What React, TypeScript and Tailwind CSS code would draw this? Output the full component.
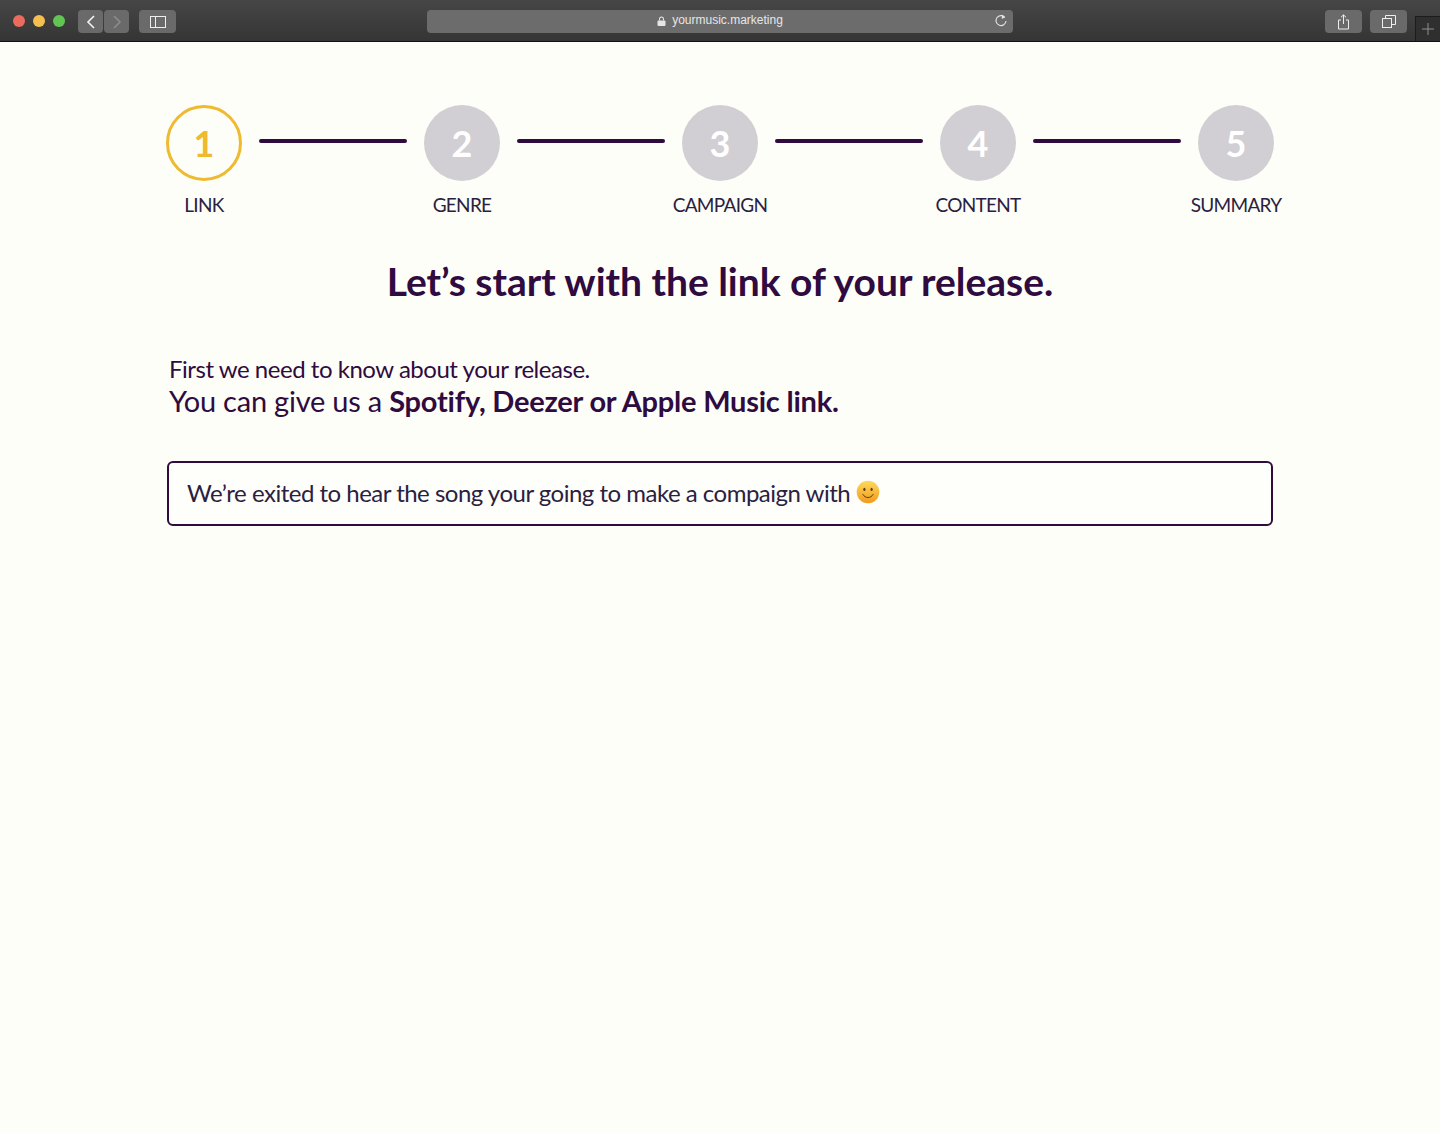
const steps = [
  { n: "1", label: "LINK", active: true },
  { n: "2", label: "GENRE" },
  { n: "3", label: "CAMPAIGN" },
  { n: "4", label: "CONTENT" },
  { n: "5", label: "SUMMARY" },
];

function Btn({ w, children, className = "" }: { w: string; children: React.ReactNode; className?: string }) {
  return <div className={`h-[23px] rounded-[4px] bg-[#6a6a6a] flex items-center justify-center ${w} ${className}`}>{children}</div>;
}

function Smiley() {
  return (
    <svg width="24" height="24" viewBox="0 0 24 24" className="inline-block ml-[6px] -translate-y-[1px]">
      <defs>
        <linearGradient id="sm" x1="0" y1="0" x2="0" y2="1">
          <stop offset="0" stopColor="#fdd95c" />
          <stop offset="1" stopColor="#f39a1c" />
        </linearGradient>
      </defs>
      <circle cx="12" cy="12" r="11.3" fill="url(#sm)" />
      <ellipse cx="8.4" cy="9.4" rx="1.1" ry="1.7" fill="#5c3a10" />
      <ellipse cx="15.6" cy="9.4" rx="1.1" ry="1.7" fill="#5c3a10" />
      <path d="M6.800 14.400c1.400 2.200 3.200 3.100 5.200 3.100s3.800-.9 5.200-3.100" fill="none" stroke="#5c3a10" strokeWidth="1" strokeLinecap="round" />
    </svg>
  );
}

export default function App() {
  return (
    <div className="min-h-[1133px] bg-[#fdfef8] font-['Lato',sans-serif]">
      <header className="relative h-[42px] bg-gradient-to-b from-[#464646] to-[#353535] border-b border-[#111] flex items-start pt-[10px] pl-[13px] pr-[33px]">
        <div className="flex gap-[8px] mt-[5px]">
          <span className="w-3 h-3 rounded-full bg-[#ec6a5e]" />
          <span className="w-3 h-3 rounded-full bg-[#f4bf4f]" />
          <span className="w-3 h-3 rounded-full bg-[#61c554]" />
        </div>
        <div className="flex gap-px ml-[13px]">
          <Btn w="w-[25px]">
            <svg width="10" height="14" viewBox="0 0 10 14" fill="none" stroke="#f2f2f2" strokeWidth="1.6"><path d="M8 1 2 7l6 6" /></svg>
          </Btn>
          <Btn w="w-[25px]">
            <svg width="10" height="14" viewBox="0 0 10 14" fill="none" stroke="#8c8c8c" strokeWidth="1.6"><path d="m2 1 6 6-6 6" /></svg>
          </Btn>
        </div>
        <Btn w="w-[37px]" className="ml-[10px]">
          <svg width="16" height="12" viewBox="0 0 16 12" fill="none" stroke="#eee" strokeWidth="1"><rect x=".5" y=".5" width="15" height="11" /><path d="M5.500 .5v11" /></svg>
        </Btn>
        <div className="relative ml-[251px] w-[586px] h-[23px] rounded-[4px] bg-[#6c6c6c] flex items-center justify-center font-['Liberation_Sans',sans-serif] text-[12px] leading-[21px] pb-[2px] text-[#e6e6e6]">
          <svg width="9" height="10" viewBox="0 0 9 10" className="mr-[6px]" fill="#e6e6e6"><path d="M2 4.500V3a2.500 2.500 0 0 1 5 0v1.500H6V3a1.500 1.500 0 0 0-3 0v1.500z" /><rect x=".5" y="4.500" width="8" height="5.500" rx="1" /></svg>
          yourmusic.marketing
          <svg width="14" height="14" viewBox="0 0 14 14" className="absolute right-[5px] top-[4px]" fill="none" stroke="#e6e6e6" strokeWidth="1.100"><path d="M10.800 3.300A5 5 0 1 0 12 7" /><path d="M7.800 .6l3.300 2.600-3.300 1.700z" fill="#e6e6e6" stroke="none" /></svg>
        </div>
        <div className="ml-auto flex gap-[8px]">
          <Btn w="w-[37px]">
            <svg width="13" height="16" viewBox="0 0 13 16" fill="none" stroke="#eee" strokeWidth="1"><path d="M4 6H1.500v9h10V6H9M6.500 10V1M4 3.300 6.500 .9 9 3.300" /></svg>
          </Btn>
          <Btn w="w-[37px]">
            <svg width="14" height="13" viewBox="0 0 14 13" fill="none" stroke="#eee" strokeWidth="1"><rect x=".5" y="3.500" width="9" height="9" /><path d="M3.500 3.500V.5h10v9h-4" /></svg>
          </Btn>
        </div>
        <div className="absolute right-0 top-[16px] w-[25px] h-[25px] bg-[#2f2f2f] border-l border-t border-[#1c1c1c] flex items-center justify-center">
          <svg width="12" height="12" viewBox="0 0 12 12" stroke="#8f8f8f" strokeWidth="1"><path d="M6 0v12M0 6h12" /></svg>
        </div>
      </header>

      <main className="w-[1108px] ml-[166px] pt-[63px]">
        <div className="flex items-start">
          {steps.map((s, i) => (
            <div key={s.n} className={`flex items-start ${i < 4 ? "flex-1" : ""}`}>
              <div className="w-[76px] flex flex-col items-center">
                <div className={`w-[76px] h-[76px] rounded-full flex items-center justify-center text-[36px] font-bold ${s.active ? "border-[3px] border-[#efba30] text-[#efba30]" : "bg-[#d1cfd4] text-white"}`}>
                  {s.n}
                </div>
                <div className="mt-[10px] text-[19px] leading-[28px] tracking-[-0.7px] text-[#2a2140] whitespace-nowrap">{s.label}</div>
              </div>
              {i < 4 && <div className="flex-1 h-1 mx-[17px] mt-[34px] rounded-full bg-[#2f0b3f]" />}
            </div>
          ))}
        </div>

        <h1 className="mt-[37px] text-center text-[39px] leading-[50px] tracking-[-0.02px] font-bold text-[#2f0b3f]">Let’s start with the link of your release.</h1>

        <div className="mt-[47px] ml-[3px] text-[#2f0b3f]">
          <p className="text-[24px] leading-[32px] tracking-[-0.47px]">First we need to know about your release.</p>
          <p className="text-[29px] leading-[31px] tracking-[-0.22px]">You can give us a <b className="font-bold">Spotify, Deezer or Apple Music link.</b></p>
        </div>

        <div className="mt-[45px] ml-px w-[1106px] h-[65px] rounded-[6px] border-2 border-[#2f0b3f] bg-[#fefefb] flex items-center pl-[18px] pb-[2px] text-[24px] tracking-[-0.5px] text-[#2a2140]">
          We’re exited to hear the song your going to make a compaign with
          <Smiley />
        </div>
      </main>
    </div>
  );
}
